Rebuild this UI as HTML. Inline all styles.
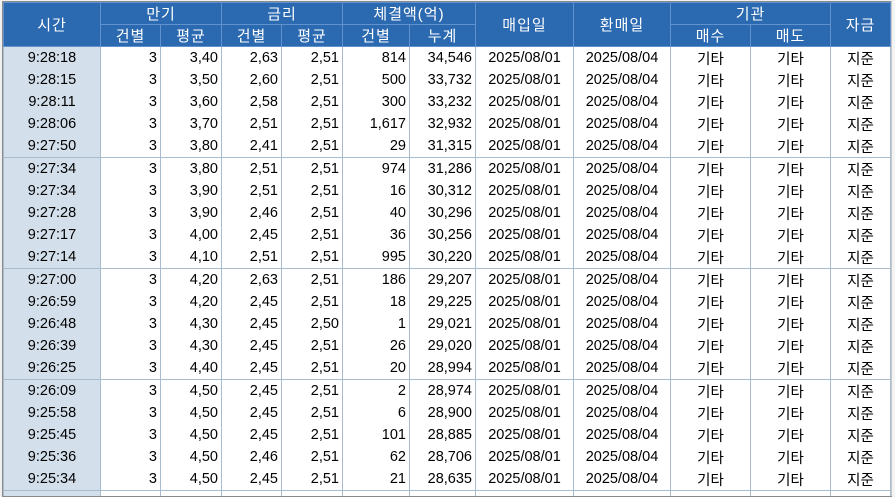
<!DOCTYPE html>
<html><head><meta charset="utf-8"><style>
body{margin:0;width:895px;height:497px;background:#f0f0f0;overflow:hidden;position:relative;font-family:"Liberation Sans","Noto Sans CJK KR",sans-serif;}
#wrap{position:absolute;left:2px;top:1px;width:889px;height:494px;border:1px solid #8a8a8a;border-right:none;background:#fff;overflow:hidden}
table{border-collapse:collapse;table-layout:fixed;font-size:14px;}
th{background:#2b6ab1;color:#fff;font-weight:normal;border:1px solid #5f92cf;height:20px;padding:0;letter-spacing:1px;font-size:15px}
td{height:22px;padding:0 3px;border-left:1px solid #a9bccd;border-right:1px solid #a9bccd;color:#000;white-space:nowrap;font-size:14.5px}
td.t{background:#d3dfeb;text-align:center}
td.r{text-align:right}
td.c{text-align:center}
tr.g td{border-bottom:1px solid #a9bccd}
#rs{position:absolute;left:891px;top:1px;width:4px;height:495px;background:#f4f4f4;border-left:1px solid #c8c8c8}
</style></head><body>
<div id="wrap"><table>
<colgroup><col style="width:97px"><col style="width:60px"><col style="width:61px"><col style="width:60px"><col style="width:61px"><col style="width:67px"><col style="width:66px"><col style="width:98px"><col style="width:97px"><col style="width:80px"><col style="width:80px"><col style="width:60px"></colgroup>
<tr><th rowspan="2">시간</th><th colspan="2">만기</th><th colspan="2">금리</th><th colspan="2">체결액(억)</th><th rowspan="2">매입일</th><th rowspan="2">환매일</th><th colspan="2">기관</th><th rowspan="2">자금</th></tr>
<tr><th>건별</th><th>평균</th><th>건별</th><th>평균</th><th>건별</th><th>누계</th><th>매수</th><th>매도</th></tr>
<tr><td class="t">9:28:18</td><td class="r">3</td><td class="r">3,40</td><td class="r">2,63</td><td class="r">2,51</td><td class="r">814</td><td class="r">34,546</td><td class="c">2025/08/01</td><td class="c">2025/08/04</td><td class="c">기타</td><td class="c">기타</td><td class="c">지준</td></tr>
<tr><td class="t">9:28:15</td><td class="r">3</td><td class="r">3,50</td><td class="r">2,60</td><td class="r">2,51</td><td class="r">500</td><td class="r">33,732</td><td class="c">2025/08/01</td><td class="c">2025/08/04</td><td class="c">기타</td><td class="c">기타</td><td class="c">지준</td></tr>
<tr><td class="t">9:28:11</td><td class="r">3</td><td class="r">3,60</td><td class="r">2,58</td><td class="r">2,51</td><td class="r">300</td><td class="r">33,232</td><td class="c">2025/08/01</td><td class="c">2025/08/04</td><td class="c">기타</td><td class="c">기타</td><td class="c">지준</td></tr>
<tr><td class="t">9:28:06</td><td class="r">3</td><td class="r">3,70</td><td class="r">2,51</td><td class="r">2,51</td><td class="r">1,617</td><td class="r">32,932</td><td class="c">2025/08/01</td><td class="c">2025/08/04</td><td class="c">기타</td><td class="c">기타</td><td class="c">지준</td></tr>
<tr class="g"><td class="t">9:27:50</td><td class="r">3</td><td class="r">3,80</td><td class="r">2,41</td><td class="r">2,51</td><td class="r">29</td><td class="r">31,315</td><td class="c">2025/08/01</td><td class="c">2025/08/04</td><td class="c">기타</td><td class="c">기타</td><td class="c">지준</td></tr>
<tr><td class="t">9:27:34</td><td class="r">3</td><td class="r">3,80</td><td class="r">2,51</td><td class="r">2,51</td><td class="r">974</td><td class="r">31,286</td><td class="c">2025/08/01</td><td class="c">2025/08/04</td><td class="c">기타</td><td class="c">기타</td><td class="c">지준</td></tr>
<tr><td class="t">9:27:34</td><td class="r">3</td><td class="r">3,90</td><td class="r">2,51</td><td class="r">2,51</td><td class="r">16</td><td class="r">30,312</td><td class="c">2025/08/01</td><td class="c">2025/08/04</td><td class="c">기타</td><td class="c">기타</td><td class="c">지준</td></tr>
<tr><td class="t">9:27:28</td><td class="r">3</td><td class="r">3,90</td><td class="r">2,46</td><td class="r">2,51</td><td class="r">40</td><td class="r">30,296</td><td class="c">2025/08/01</td><td class="c">2025/08/04</td><td class="c">기타</td><td class="c">기타</td><td class="c">지준</td></tr>
<tr><td class="t">9:27:17</td><td class="r">3</td><td class="r">4,00</td><td class="r">2,45</td><td class="r">2,51</td><td class="r">36</td><td class="r">30,256</td><td class="c">2025/08/01</td><td class="c">2025/08/04</td><td class="c">기타</td><td class="c">기타</td><td class="c">지준</td></tr>
<tr class="g"><td class="t">9:27:14</td><td class="r">3</td><td class="r">4,10</td><td class="r">2,51</td><td class="r">2,51</td><td class="r">995</td><td class="r">30,220</td><td class="c">2025/08/01</td><td class="c">2025/08/04</td><td class="c">기타</td><td class="c">기타</td><td class="c">지준</td></tr>
<tr><td class="t">9:27:00</td><td class="r">3</td><td class="r">4,20</td><td class="r">2,63</td><td class="r">2,51</td><td class="r">186</td><td class="r">29,207</td><td class="c">2025/08/01</td><td class="c">2025/08/04</td><td class="c">기타</td><td class="c">기타</td><td class="c">지준</td></tr>
<tr><td class="t">9:26:59</td><td class="r">3</td><td class="r">4,20</td><td class="r">2,45</td><td class="r">2,51</td><td class="r">18</td><td class="r">29,225</td><td class="c">2025/08/01</td><td class="c">2025/08/04</td><td class="c">기타</td><td class="c">기타</td><td class="c">지준</td></tr>
<tr><td class="t">9:26:48</td><td class="r">3</td><td class="r">4,30</td><td class="r">2,45</td><td class="r">2,50</td><td class="r">1</td><td class="r">29,021</td><td class="c">2025/08/01</td><td class="c">2025/08/04</td><td class="c">기타</td><td class="c">기타</td><td class="c">지준</td></tr>
<tr><td class="t">9:26:39</td><td class="r">3</td><td class="r">4,30</td><td class="r">2,45</td><td class="r">2,51</td><td class="r">26</td><td class="r">29,020</td><td class="c">2025/08/01</td><td class="c">2025/08/04</td><td class="c">기타</td><td class="c">기타</td><td class="c">지준</td></tr>
<tr class="g"><td class="t">9:26:25</td><td class="r">3</td><td class="r">4,40</td><td class="r">2,45</td><td class="r">2,51</td><td class="r">20</td><td class="r">28,994</td><td class="c">2025/08/01</td><td class="c">2025/08/04</td><td class="c">기타</td><td class="c">기타</td><td class="c">지준</td></tr>
<tr><td class="t">9:26:09</td><td class="r">3</td><td class="r">4,50</td><td class="r">2,45</td><td class="r">2,51</td><td class="r">2</td><td class="r">28,974</td><td class="c">2025/08/01</td><td class="c">2025/08/04</td><td class="c">기타</td><td class="c">기타</td><td class="c">지준</td></tr>
<tr><td class="t">9:25:58</td><td class="r">3</td><td class="r">4,50</td><td class="r">2,45</td><td class="r">2,51</td><td class="r">6</td><td class="r">28,900</td><td class="c">2025/08/01</td><td class="c">2025/08/04</td><td class="c">기타</td><td class="c">기타</td><td class="c">지준</td></tr>
<tr><td class="t">9:25:45</td><td class="r">3</td><td class="r">4,50</td><td class="r">2,45</td><td class="r">2,51</td><td class="r">101</td><td class="r">28,885</td><td class="c">2025/08/01</td><td class="c">2025/08/04</td><td class="c">기타</td><td class="c">기타</td><td class="c">지준</td></tr>
<tr><td class="t">9:25:36</td><td class="r">3</td><td class="r">4,50</td><td class="r">2,46</td><td class="r">2,51</td><td class="r">62</td><td class="r">28,706</td><td class="c">2025/08/01</td><td class="c">2025/08/04</td><td class="c">기타</td><td class="c">기타</td><td class="c">지준</td></tr>
<tr class="g"><td class="t">9:25:34</td><td class="r">3</td><td class="r">4,50</td><td class="r">2,45</td><td class="r">2,51</td><td class="r">21</td><td class="r">28,635</td><td class="c">2025/08/01</td><td class="c">2025/08/04</td><td class="c">기타</td><td class="c">기타</td><td class="c">지준</td></tr>
<tr><td class="t"></td><td></td><td></td><td></td><td></td><td></td><td></td><td></td><td></td><td></td><td></td><td></td></tr>
</table></div>
<div id="rs"></div>
</body></html>
